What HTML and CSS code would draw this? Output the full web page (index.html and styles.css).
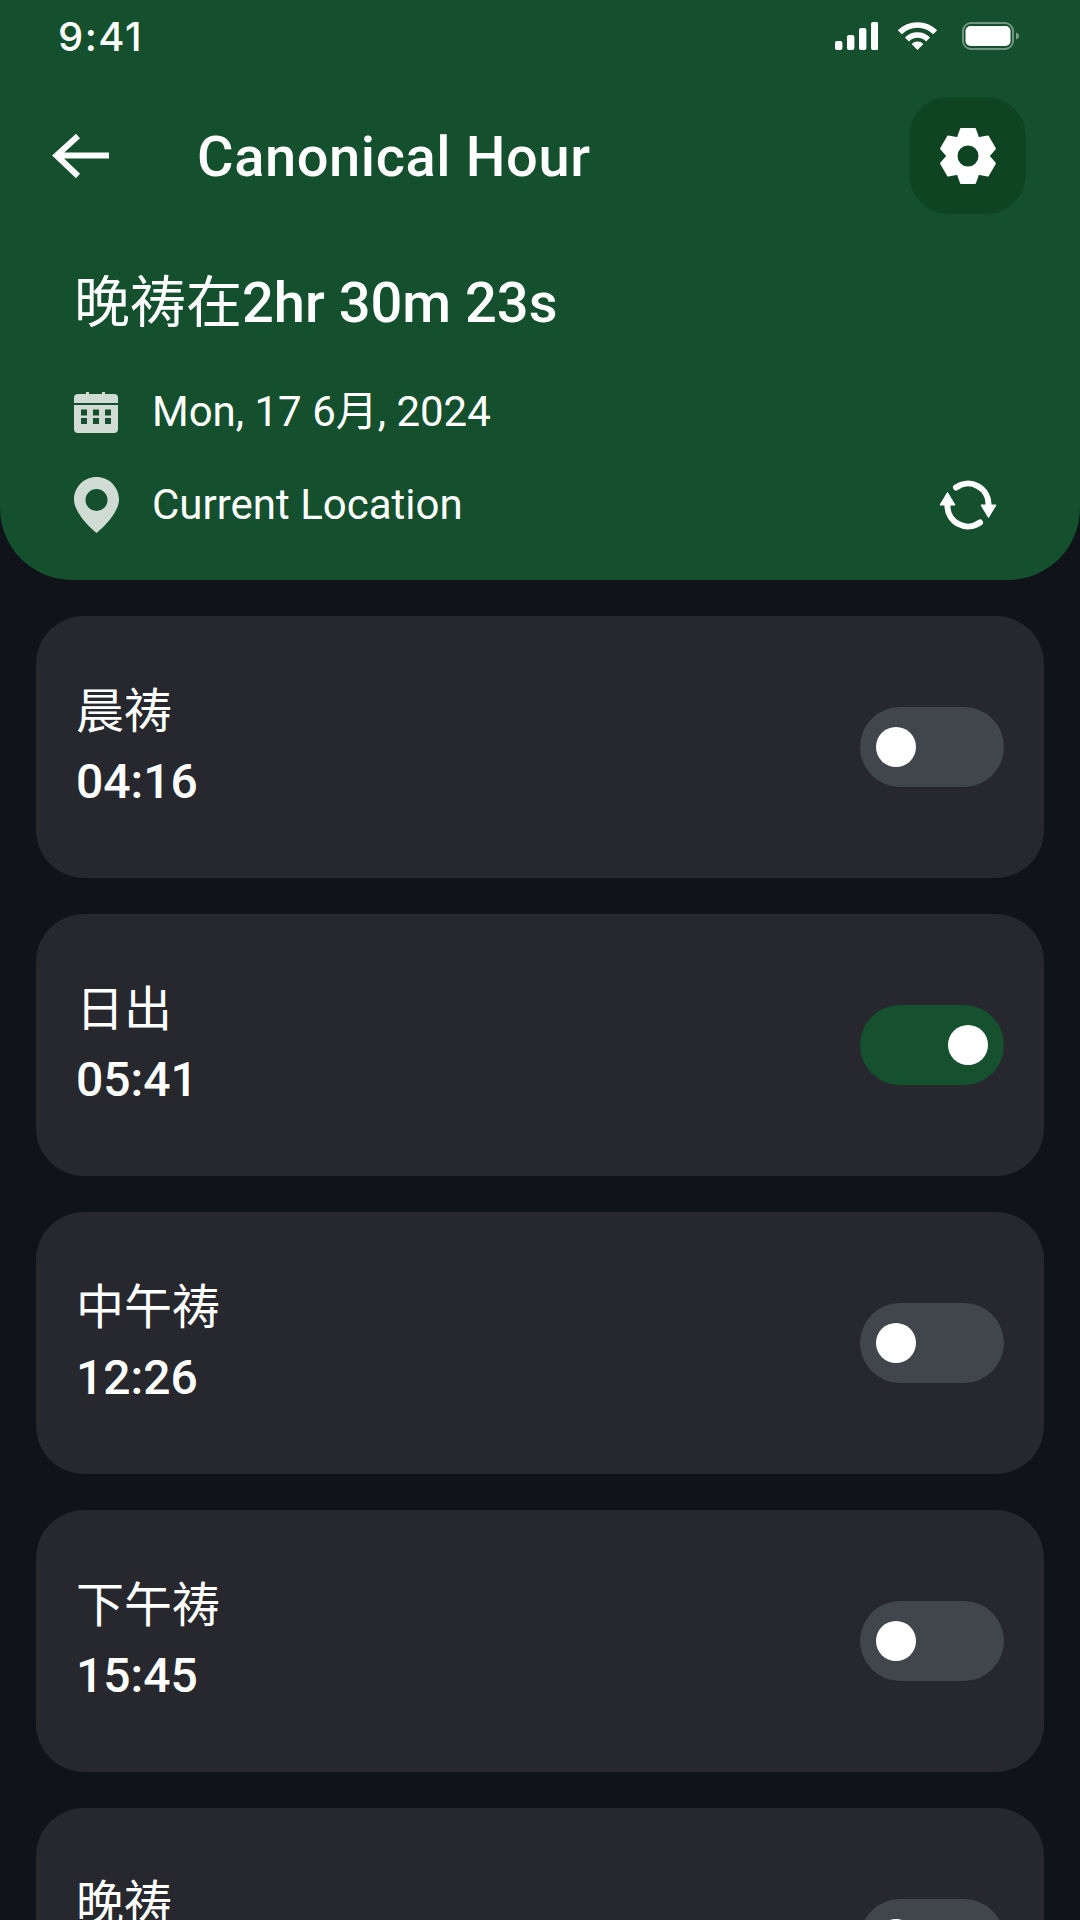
FILE: index.html
```html
<!DOCTYPE html>
<html lang="en">
<head>
	<meta charset="UTF-8">
	<title>Canonical Hour</title>
	<link rel="stylesheet" href="styles.css">
</head>
<body>
	<div class="header">
		<div class="status">
			<span class="time">9:41</span>
			<div class="status-icons">
				<svg class="signal" width="43" height="28" viewBox="0 0 43 28">
					<rect x="0" y="19" width="7.4" height="9" rx="2"/>
					<rect x="12" y="13" width="7.4" height="15" rx="2"/>
					<rect x="24" y="6" width="7.4" height="22" rx="2"/>
					<rect x="36" y="0" width="7.4" height="28" rx="2"/>
				</svg>
				<svg class="wifi" width="41" height="28" viewBox="0 0 41 28">
					<path d="M2.8 10.3A25 25 0 0 1 38.2 10.3" fill="none" stroke="#fff" stroke-width="5.6"/>
					<path d="M9.9 17.4A15 15 0 0 1 31.1 17.4" fill="none" stroke="#fff" stroke-width="5.6"/>
					<path d="M20.5 28L14.6 22A8.4 8.4 0 0 1 26.4 22Z" fill="#fff"/>
				</svg>
				<svg class="battery" width="57" height="28" viewBox="0 0 57 28">
					<rect x="1" y="1" width="50" height="26" rx="8" fill="none" stroke="#fff" stroke-opacity="0.4" stroke-width="2"/>
					<rect x="3.5" y="4" width="45" height="20" rx="5" fill="#fff"/>
					<path d="M54 10.5C56 11.5 57 12.6 57 14C57 15.4 56 16.5 54 17.5Z" fill="#fff" fill-opacity="0.45"/>
				</svg>
			</div>
		</div>

		<div class="appbar">
			<svg class="back" width="57" height="44" viewBox="0 0 57 44">
				<path d="M57 21.5H5M26 2L4.5 21.5L26 42" fill="none" stroke="#fff" stroke-width="6"/>
			</svg>
			<span class="title">Canonical Hour</span>
			<a class="settings" href="javascript:;">
				<svg width="60" height="60" viewBox="-30 -30 60 60">
					<path fill="#fff" stroke="#fff" stroke-width="2" stroke-linejoin="round" fill-rule="evenodd" d="M-7 -27L7 -27L10.25 -17.75L19.88 -19.56L26.88 -7.44L20.5 0L26.88 7.44L19.88 19.56L10.25 17.75L7 27L-7 27L-10.25 17.75L-19.88 19.56L-26.88 7.44L-20.5 0L-26.88 -7.44L-19.88 -19.56L-10.25 -17.75ZM11.5 0A11.5 11.5 0 1 0 -11.5 0A11.5 11.5 0 1 0 11.5 0Z"/>
				</svg>
			</a>
		</div>

		<div class="countdown">晚祷在<b>2hr 30m 23s</b></div>

		<div class="info date-row">
			<svg class="info-icon" width="44" height="41" viewBox="0 0 44 41">
				<path fill-rule="evenodd" d="M4 2H12V0H15V2H28V0H31V2H40Q44 2 44 6V11H0V6Q0 2 4 2Z"/>
				<path fill-rule="evenodd" d="M0 13H44V37Q44 41 40 41H4Q0 41 0 37ZM7 17.5V23.5H13V17.5ZM19 17.5V23.5H25V17.5ZM31 17.5V23.5H37V17.5ZM7 26V32H13V26ZM19 26V32H25V26ZM31 26V32H37V26Z"/>
			</svg>
			<span>Mon, 17 6月, 2024</span>
		</div>

		<div class="info location-row">
			<svg class="info-icon" width="45" height="56" viewBox="0 0 45 56">
				<path fill-rule="evenodd" d="M22.5 0C35 0 45 10 45 22.5C45 35 30 50 22.5 56C15 50 0 35 0 22.5C0 10 10 0 22.5 0ZM33.5 23A11 11 0 1 0 11.5 23A11 11 0 1 0 33.5 23Z"/>
			</svg>
			<span>Current Location</span>
			<svg class="refresh" width="60" height="60" viewBox="-30 -30 60 60">
				<path d="M-12 -17.5A20.5 20.5 0 0 1 20.5 0M12 17.5A20.5 20.5 0 0 1 -20.5 0" fill="none" stroke="#fff" stroke-width="6" stroke-linecap="round"/>
				<path d="M13 0H28L20.5 12.5ZM-28 0H-13L-20.5 -12.5Z" fill="#fff" stroke="#fff" stroke-linejoin="round"/>
			</svg>
		</div>
	</div>

	<div class="list">
		<div class="card">
			<div class="card-text"><div class="name">晨祷</div><div class="clock">04:16</div></div>
			<div class="toggle"><i></i></div>
		</div>
		<div class="card">
			<div class="card-text"><div class="name">日出</div><div class="clock">05:41</div></div>
			<div class="toggle on"><i></i></div>
		</div>
		<div class="card">
			<div class="card-text"><div class="name">中午祷</div><div class="clock">12:26</div></div>
			<div class="toggle"><i></i></div>
		</div>
		<div class="card">
			<div class="card-text"><div class="name">下午祷</div><div class="clock">15:45</div></div>
			<div class="toggle"><i></i></div>
		</div>
		<div class="card">
			<div class="card-text"><div class="name">晚祷</div><div class="clock">18:00</div></div>
			<div class="toggle"><i></i></div>
		</div>
	</div>
</body>
</html>
```

FILE: styles.css
```css
html, body {
	margin: 0;
	height: 1920px;
	overflow: hidden;
}
body {
	background: #11131a;
	color: #fff;
	font-family: Roboto, "Noto Sans CJK SC", sans-serif;
}
.header {
	height: 580px;
	box-sizing: border-box;
	background: #14502d;
	border-radius: 0 0 72px 72px;
}
.status {
	height: 72px;
	padding: 0 61px 0 58px;
	display: flex;
	justify-content: space-between;
	align-items: center;
}
.time {
	font-family: Inter, sans-serif;
	font-size: 40px;
	font-weight: 500;
	letter-spacing: 1.5px;
}
.status-icons {
	display: flex;
	align-items: center;
}
.signal {
	fill: #fff;
}
.wifi {
	margin-left: 19px;
}
.battery {
	margin-left: 24px;
}
.appbar {
	margin-top: 25px;
	height: 117px;
	padding: 0 54px 0 52px;
	display: flex;
	align-items: center;
}
.title {
	margin-left: 88px;
	padding-top: 2px;
	flex: 1;
	font-size: 56px;
	letter-spacing: 0.6px;
	font-weight: 500;
}
.settings {
	width: 117px;
	height: 117px;
	border-radius: 40px;
	background: #0f4423;
	display: flex;
	align-items: center;
	justify-content: center;
}
.countdown {
	margin-top: 57px;
	padding-left: 74px;
	line-height: 64px;
	font-size: 56px;
}
.countdown b {
	font-weight: 500;
}
.info {
	height: 64px;
	padding-left: 74px;
	padding-right: 84px;
	display: flex;
	align-items: center;
	font-size: 42px;
}
.info span {
	flex: 1;
	line-height: 50px;
}
.date-row {
	margin-top: 45px;
}
.location-row {
	margin-top: 29px;
}
.info-icon {
	fill: #d0dcd3;
	margin-right: 33px;
}
.date-row .info-icon {
	width: 44px;
	margin-right: 34px;
}
.refresh {
	margin-right: -2px;
}
.list {
	padding: 36px;
	display: flex;
	flex-direction: column;
	gap: 36px;
}
.card {
	height: 262px;
	flex: none;
	box-sizing: border-box;
	padding: 0 40px;
	background: #26282e;
	border-radius: 48px;
	display: flex;
	justify-content: space-between;
	align-items: center;
}
.name {
	font-size: 48px;
	line-height: 68px;
}
.clock {
	margin-top: 2px;
	font-size: 48px;
	line-height: 68px;
	font-weight: 500;
}
.toggle {
	width: 144px;
	height: 80px;
	box-sizing: border-box;
	padding: 0 16px;
	border-radius: 40px;
	background: #41454c;
	display: flex;
	align-items: center;
}
.toggle i {
	width: 40px;
	height: 40px;
	border-radius: 50%;
	background: #fff;
}
.toggle.on {
	background: #15512e;
	justify-content: flex-end;
}
```
